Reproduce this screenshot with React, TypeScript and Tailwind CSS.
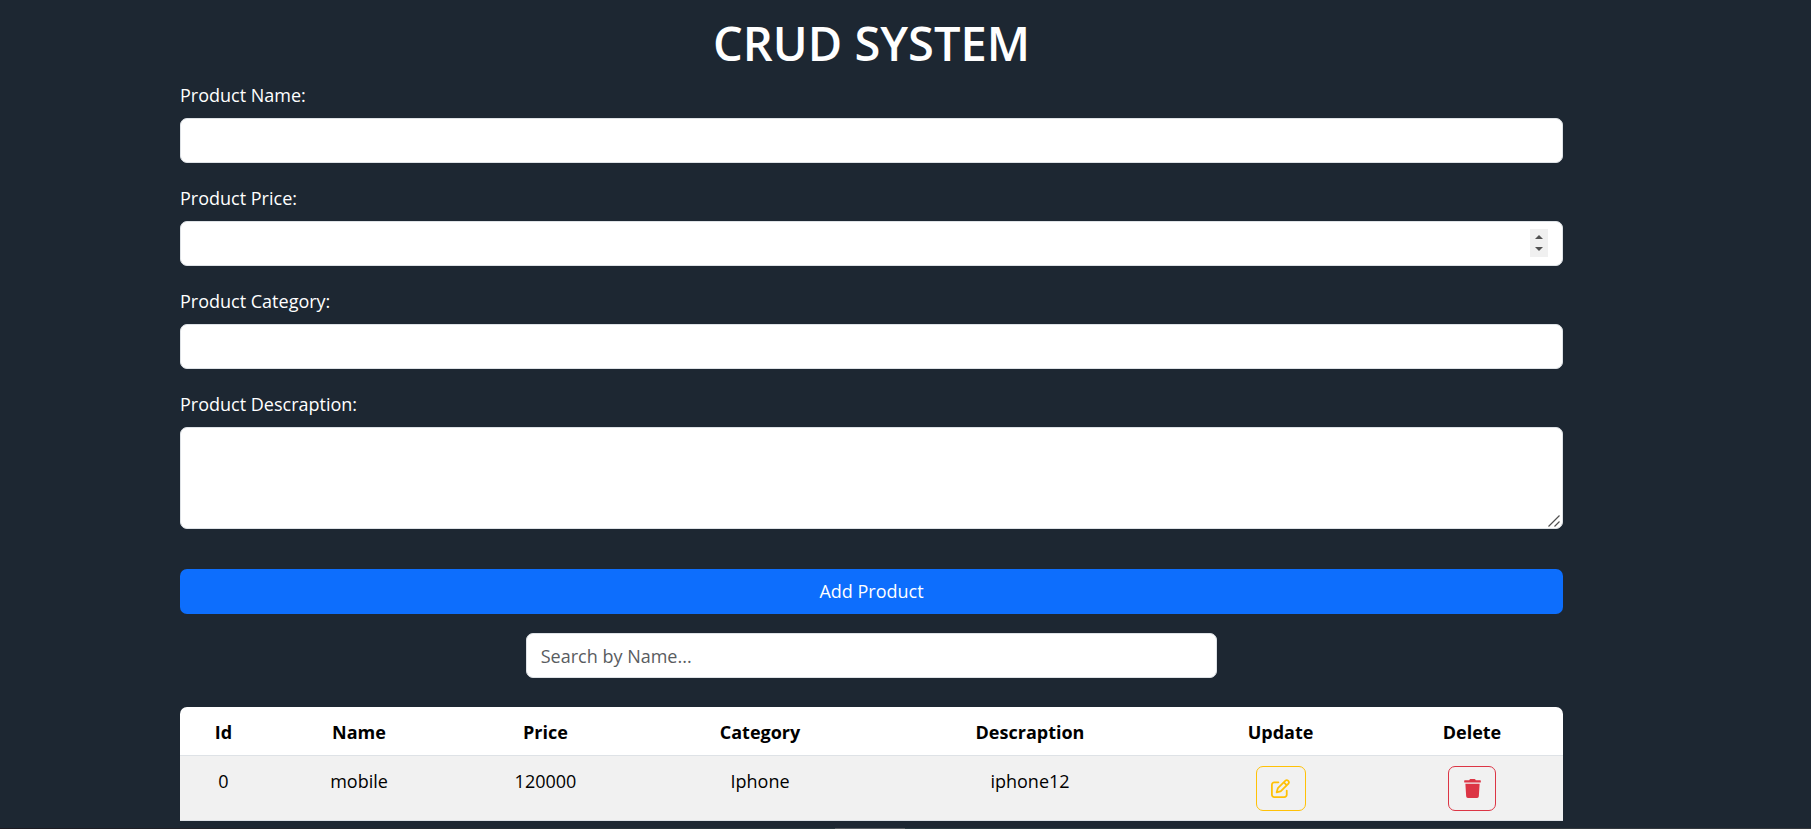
import React from "react";
import { FaTrash } from "react-icons/fa";
import { FaRegPenToSquare } from "react-icons/fa6";

type Product = {
  name: string;
  price: number;
  category: string;
  description: string;
};

const products: Product[] = [
  { name: "mobile", price: 120000, category: "Iphone", description: "iphone12" },
];

const columns = [
  { title: "Id", width: "w-[87px]" },
  { title: "Name", width: "w-[184px]" },
  { title: "Price", width: "w-[189px]" },
  { title: "Category", width: "w-[240px]" },
  { title: "Descraption", width: "w-[300px]" },
  { title: "Update", width: "w-[201px]" },
  { title: "Delete", width: "w-[182px]" },
];

const control =
  "block w-full rounded-[7px] border border-[#dee2e6] bg-white px-[14px] text-[18px] text-[#212529] outline-none placeholder:text-[#595c5f]";

function Field({ id, label, children }: { id: string; label: string; children: React.ReactNode }) {
  return (
    <div className="flex flex-col gap-2">
      <label htmlFor={id} className="text-[18px] leading-[30px] text-white">
        {label}
      </label>
      {children}
    </div>
  );
}

function PriceInput() {
  const ref = React.useRef<HTMLInputElement>(null);
  return (
    <div className="relative">
      <input
        ref={ref}
        id="price"
        type="number"
        className={`${control} h-[45px] [&::-webkit-inner-spin-button]:appearance-none`}
      />
      <div className="absolute top-2 right-[15px] flex h-[28px] w-[18px] flex-col bg-[#f0f0f0] text-[#505050]">
        <button
          type="button"
          aria-label="Increase price"
          onClick={() => ref.current?.stepUp()}
          className="flex flex-1 items-end justify-center pb-1"
        >
          <svg width="8" height="4" viewBox="0 0 8 4" fill="currentColor">
            <path d="M4 0 8 4H0z" />
          </svg>
        </button>
        <button
          type="button"
          aria-label="Decrease price"
          onClick={() => ref.current?.stepDown()}
          className="flex flex-1 items-start justify-center pt-1"
        >
          <svg width="8" height="4" viewBox="0 0 8 4" fill="currentColor">
            <path d="M0 0H8L4 4z" />
          </svg>
        </button>
      </div>
    </div>
  );
}

export default function App() {
  return (
    <div className="flex min-h-screen flex-col justify-between bg-[#1d2732] font-['Open_Sans','Noto_Sans',sans-serif]">
      <main className="pt-[14px] pr-[248px] pl-[180px]">
        <h1 className="text-center text-[47px] leading-[58px] font-semibold text-white">CRUD SYSTEM</h1>
        <form className="flex flex-col gap-5 pt-2" onSubmit={(e) => e.preventDefault()}>
          <Field id="name" label="Product Name:">
            <input id="name" type="text" className={`${control} h-[45px]`} />
          </Field>
          <Field id="price" label="Product Price:">
            <PriceInput />
          </Field>
          <Field id="category" label="Product Category:">
            <input id="category" type="text" className={`${control} h-[45px]`} />
          </Field>
          <Field id="description" label="Product Descraption:">
            <div className="relative">
              <textarea
                id="description"
                className={`${control} h-[102px] resize-y [&::-webkit-resizer]:bg-transparent`}
              />
              <svg
                className="pointer-events-none absolute right-[3px] bottom-[2px]"
                width="12"
                height="12"
                viewBox="0 0 12 12"
                fill="none"
                stroke="#505050"
                strokeWidth="1.2"
              >
                <path d="M.5 11.500 11.500.5M6.500 11.500 11.500 6.500" />
              </svg>
            </div>
          </Field>
          <button
            type="submit"
            className="mt-5 h-[45px] rounded-[7px] bg-[#0d6efd] text-[18px] text-white"
          >
            Add Product
          </button>
        </form>
        <input
          type="search"
          aria-label="Search by Name"
          placeholder="Search by Name..."
          className={`${control} mx-auto mt-[19px] h-[45px] max-w-1/2`}
        />
        <div className="mt-[29px] overflow-hidden rounded-t-[7px]">
          <table className="w-full border-collapse text-center text-[18px] leading-[28px] text-black">
            <thead className="bg-white">
              <tr className="border-b border-[#dee2e6]">
                {columns.map((c) => (
                  <th key={c.title} className={`${c.width} pt-[11px] pb-[9px] font-bold`}>
                    {c.title}
                  </th>
                ))}
              </tr>
            </thead>
            <tbody className="bg-[#f1f1f1]">
              {products.map((p, i) => (
                <tr key={i} className="border-b border-[#dee2e6] align-top">
                  <td className="py-[11px]">{i}</td>
                  <td className="py-[11px]">{p.name}</td>
                  <td className="py-[11px]">{p.price}</td>
                  <td className="py-[11px]">{p.category}</td>
                  <td className="py-[11px]">{p.description}</td>
                  <td className="pt-[10px] pb-[9px]">
                    <button
                      type="button"
                      aria-label="Update"
                      className="inline-flex h-[45px] w-[50px] items-center justify-center rounded-[7px] border border-[#ffc107] align-top text-[19px] text-[#ffc107]"
                    >
                      <FaRegPenToSquare />
                    </button>
                  </td>
                  <td className="pt-[10px] pb-[9px]">
                    <button
                      type="button"
                      aria-label="Delete"
                      className="inline-flex h-[45px] w-[48px] items-center justify-center rounded-[7px] border border-[#dc3545] align-top text-[19px] text-[#dc3545]"
                    >
                      <FaTrash />
                    </button>
                  </td>
                </tr>
              ))}
            </tbody>
          </table>
        </div>
      </main>
      <footer className="flex h-px justify-center bg-linear-to-r from-[#1c1b22] via-[#2c3b42] to-[#34373c] pr-[71px]">
        <div className="w-[70px] bg-[#5a5f64]" />
      </footer>
    </div>
  );
}
